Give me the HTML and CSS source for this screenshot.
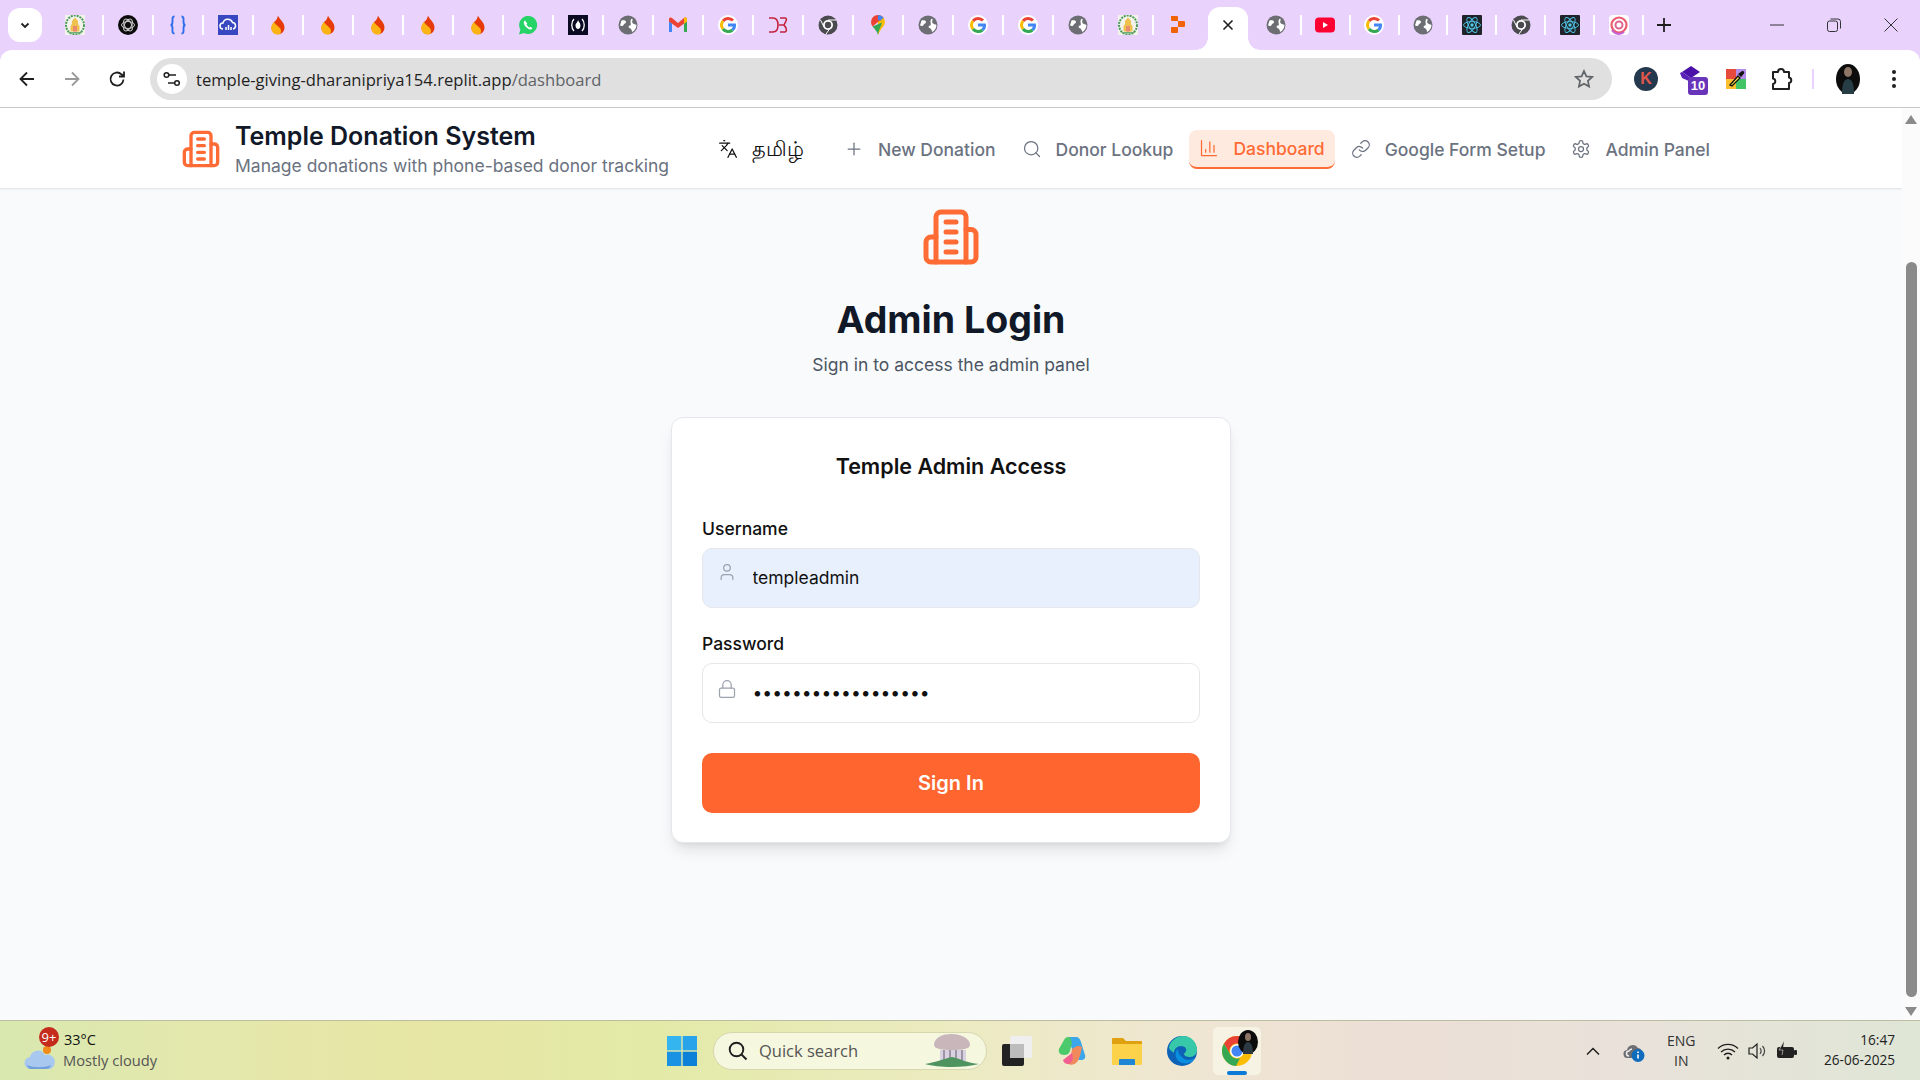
FILE: index.html
```html
<!DOCTYPE html>
<html lang="en">
<head>
<meta charset="utf-8">
<title>Temple Donation System</title>
<link rel="stylesheet" href="styles.css">
</head>
<body>
<svg class="sprite" width="0" height="0" aria-hidden="true">
  <symbol id="tn" viewBox="0 0 20 20"><rect width="20" height="20" fill="#f3f3ec"/><ellipse cx="10" cy="10" rx="9" ry="9.500" fill="none" stroke="#4c9a5a" stroke-width="2" stroke-dasharray="2 1"/><path d="M10 2.500l3 3.500v3l1.500 2v5.500h-9V11L7 9V6z" fill="#efc24f"/><path d="M8 11h4v5.500H8z" fill="#e98b6c"/><path d="M4 17h12v1.500H4z" fill="#6fae7a"/></symbol>
  <symbol id="openai" viewBox="0 0 20 20"><circle cx="10" cy="10" r="10" fill="#0b0b0b"/><g fill="none" stroke="#ccc" stroke-width="1"><ellipse cx="10" cy="10" rx="6.500" ry="3.500"/><ellipse cx="10" cy="10" rx="6.500" ry="3.500" transform="rotate(60 10 10)"/><ellipse cx="10" cy="10" rx="6.500" ry="3.500" transform="rotate(120 10 10)"/></g></symbol>
  <symbol id="braces" viewBox="0 0 20 20"><path d="M6.500 1.500C4 1.500 4.500 4 4.500 6.500S4 10 2.500 10c1.500 0 2 1 2 3.500s-.5 5 2 5M13.500 1.500c2.500 0 2 2.500 2 5s.5 3.500 2 3.500c-1.500 0-2 1-2 3.500s.5 5-2 5" fill="none" stroke="#2f6fed" stroke-width="1.900"/></symbol>
  <symbol id="cloud" viewBox="0 0 20 20"><rect width="20" height="20" fill="#3848c0"/><path d="M5 14a3 3 0 0 1 0-6 5 5 0 0 1 9.500-.5A3.300 3.300 0 0 1 15 14" fill="none" stroke="#fff" stroke-width="1.500"/><path d="M8 15v-3M10.500 15v-5M13 15v-3" stroke="#fff" stroke-width="1.500"/></symbol>
  <symbol id="fire" viewBox="0 0 20 20"><path d="M10 .500c1 3.500 6.500 6.500 6.500 12A6.500 6.500 0 0 1 3.500 13c0-3 2-4.500 3-6.500C8.500 5.500 9.500 3 10 .500z" fill="#e63a0a"/><path d="M6 7c-2 2-3 4-2.700 6.300A6 6 0 0 0 10 19.500c2 0 3-1 3-3.500 0-4-5-5-7-9z" fill="#fcb316"/></symbol>
  <symbol id="wa" viewBox="0 0 20 20"><path d="M1 19.500l1.400-5A9 9 0 1 1 6 17.900z" fill="#25d366"/><path d="M7 5.500c-2 1-1.500 4 1 6.500s5 3.500 6.500 1.500l-2-1.700-1 .8c-1-.3-2.700-2-3-3l.8-1z" fill="#fff"/></symbol>
  <symbol id="fcc" viewBox="0 0 20 20"><rect width="20" height="20" fill="#0a0a23"/><path d="M6 4c-3 3-3 9 0 12M14 4c3 3 3 9 0 12" fill="none" stroke="#fff" stroke-width="1.300"/><path d="M10 5c.5 2 2.500 3 2.500 5.500S11 14 10 14s-2.500-1-2.500-3.500S9.500 8 10 5z" fill="#fff"/></symbol>
  <symbol id="globe" viewBox="0 0 20 20"><circle cx="10" cy="10" r="9.500" fill="#6d6e73"/><path d="M3.500 5.500c2.500-.5 4.500 0 4.500 1.500S6 8.500 5.500 10 3 11 2 10.500zM14.500 4c.5 1.500-1 2.500 0 4s3 1 4 2c0 3-2 6-4.500 7 0-2-1-3.500-2.500-4s-1-2.500.5-2.500.5-2.500.5-4 1-3.200 2-2.500z" fill="#fff"/></symbol>
  <symbol id="gmail" viewBox="0 0 20 20"><path d="M1 17V6l3 2.500V17z" fill="#4285f4"/><path d="M19 17V6l-3 2.500V17z" fill="#34a853"/><path d="M1 6.500V4c0-1.500 2-2 3-1l6 5 6-5c1-1 3-.5 3 1v2.500L10 13z" fill="#ea4335"/><path d="M16 2.800c1-.8 3-.3 3 1.200v2.500l-3 2.300z" fill="#fbbc04"/></symbol>
  <symbol id="google" viewBox="0 0 20 20"><circle cx="10" cy="10" r="10" fill="#fff"/><g fill="none" stroke-width="3"><path d="M15 5.600A6.500 6.500 0 0 0 5 6" stroke="#ea4335"/><path d="M5 6a6.500 6.500 0 0 0 0 8" stroke="#fbbc04"/><path d="M5 14a6.500 6.500 0 0 0 9.500 1" stroke="#34a853"/><path d="M14.500 15a6 6 0 0 0 2-5H10" stroke="#4285f4"/></g></symbol>
  <symbol id="d3" viewBox="0 0 20 20"><path d="M1 3h4c4 0 5 3 5 7s-1 7-5 7H1M12 3h5c1 0 2 1 1 3l-2 4 2 3c1 2 0 4-1 4h-5M11 10h5" fill="none" stroke="#c4233c" stroke-width="1.600"/></symbol>
  <symbol id="chrome" viewBox="0 0 20 20"><circle cx="10" cy="10" r="9.500" fill="#4a4a4f"/><circle cx="10" cy="10" r="5" fill="#fff"/><circle cx="10" cy="10" r="3.200" fill="#4a4a4f"/><path d="M10 5h8M6 12L2.500 5M13 12l-5 7" stroke="#fff" stroke-width="1"/></symbol>
  <symbol id="maps" viewBox="0 0 20 20"><path d="M10 0a7 7 0 0 1 7 7c0 4-5 7-7 13z" fill="#fbbc04"/><path d="M10 0a7 7 0 0 1 5.500 2.600L4.500 11.500C3.500 10 3 8.500 3 7a7 7 0 0 1 7-7z" fill="#ea4335"/><path d="M10 0a7 7 0 0 1 5.500 2.600L12 6a2.500 2.500 0 0 0-2-1z" fill="#4285f4"/><path d="M4.500 11.500L14 7.500C13 12 11 14 10 20c-1-4-3.500-6-5.500-8.500z" fill="#34a853"/></symbol>
  <symbol id="replit" viewBox="0 0 20 20"><path d="M3 1h6a1 1 0 0 1 1 1v4H4a1 1 0 0 1-1-1zM10 6h6a1 1 0 0 1 1 1v4a1 1 0 0 1-1 1h-6zM3 12h7v5a1 1 0 0 1-1 1H4a1 1 0 0 1-1-1z" fill="#f26207"/></symbol>
  <symbol id="yt" viewBox="0 0 20 20"><rect y="2.500" width="20" height="15" rx="4" fill="#ff0033"/><path d="M8 7l5 3-5 3z" fill="#fff"/></symbol>
  <symbol id="react" viewBox="0 0 20 20"><rect width="20" height="20" rx="1" fill="#20232a"/><g fill="none" stroke="#4fc8e8" stroke-width=".9"><ellipse cx="10" cy="10" rx="8.500" ry="3.400"/><ellipse cx="10" cy="10" rx="8.500" ry="3.400" transform="rotate(60 10 10)"/><ellipse cx="10" cy="10" rx="8.500" ry="3.400" transform="rotate(120 10 10)"/></g><circle cx="10" cy="10" r="1.700" fill="#4fc8e8"/></symbol>
  <symbol id="spiral" viewBox="0 0 20 20"><rect width="20" height="20" rx="4" fill="#fff"/><circle cx="10" cy="10" r="7.500" fill="none" stroke="#ec5a6e" stroke-width="2.200"/><circle cx="10" cy="10" r="3.500" fill="none" stroke="#e0628f" stroke-width="2"/><path d="M3 15a8 8 0 0 0 12 2" stroke="#c860d0" stroke-width="2.200" fill="none"/></symbol>
  <symbol id="bld" viewBox="0 0 24 24"><path d="M6 22V4a2 2 0 0 1 2-2h8a2 2 0 0 1 2 2v18Z"/><path d="M6 12H4a2 2 0 0 0-2 2v6a2 2 0 0 0 2 2h2"/><path d="M18 9h2a2 2 0 0 1 2 2v9a2 2 0 0 1-2 2h-2"/><path d="M10 6h4"/><path d="M10 10h4"/><path d="M10 14h4"/><path d="M10 18h4"/></symbol>
</svg>

<div class="tabstrip">
  <button class="tab-menu"><svg viewBox="0 0 12 12" width="12" height="12"><path d="M2.500 4.500L6 8l3.500-3.500" fill="none" stroke="#1f1f1f" stroke-width="1.800"/></svg></button>
  <div class="tabs">
    <span class="tab tab-first"><svg class="fav"><use href="#tn"/></svg></span>
    <span class="tab"><svg class="fav"><use href="#openai"/></svg></span>
    <span class="tab"><svg class="fav"><use href="#braces"/></svg></span>
    <span class="tab"><svg class="fav"><use href="#cloud"/></svg></span>
    <span class="tab"><svg class="fav"><use href="#fire"/></svg></span>
    <span class="tab"><svg class="fav"><use href="#fire"/></svg></span>
    <span class="tab"><svg class="fav"><use href="#fire"/></svg></span>
    <span class="tab"><svg class="fav"><use href="#fire"/></svg></span>
    <span class="tab"><svg class="fav"><use href="#fire"/></svg></span>
    <span class="tab"><svg class="fav"><use href="#wa"/></svg></span>
    <span class="tab"><svg class="fav"><use href="#fcc"/></svg></span>
    <span class="tab"><svg class="fav"><use href="#globe"/></svg></span>
    <span class="tab"><svg class="fav"><use href="#gmail"/></svg></span>
    <span class="tab"><svg class="fav"><use href="#google"/></svg></span>
    <span class="tab"><svg class="fav"><use href="#d3"/></svg></span>
    <span class="tab"><svg class="fav"><use href="#chrome"/></svg></span>
    <span class="tab"><svg class="fav"><use href="#maps"/></svg></span>
    <span class="tab"><svg class="fav"><use href="#globe"/></svg></span>
    <span class="tab"><svg class="fav"><use href="#google"/></svg></span>
    <span class="tab"><svg class="fav"><use href="#google"/></svg></span>
    <span class="tab"><svg class="fav"><use href="#globe"/></svg></span>
    <span class="tab"><svg class="fav"><use href="#tn"/></svg></span>
    <span class="tab tab-last"><svg class="fav"><use href="#replit"/></svg></span>
    <span class="tab-active"><svg viewBox="0 0 12 12" width="12" height="12"><path d="M1.500 1.500l9 9M10.500 1.500l-9 9" stroke="#1f1f1f" stroke-width="1.600"/></svg></span>
    <span class="tab tab-after tab-after-first"><svg class="fav"><use href="#globe"/></svg></span>
    <span class="tab tab-after"><svg class="fav"><use href="#yt"/></svg></span>
    <span class="tab tab-after"><svg class="fav"><use href="#google"/></svg></span>
    <span class="tab tab-after"><svg class="fav"><use href="#globe"/></svg></span>
    <span class="tab tab-after"><svg class="fav"><use href="#react"/></svg></span>
    <span class="tab tab-after"><svg class="fav"><use href="#chrome"/></svg></span>
    <span class="tab tab-after"><svg class="fav"><use href="#react"/></svg></span>
    <span class="tab tab-after"><svg class="fav"><use href="#spiral"/></svg></span>
    <span class="tab-new"><svg viewBox="0 0 14 14" width="14" height="14"><path d="M7 0v14M0 7h14" stroke="#1f1f1f" stroke-width="1.800"/></svg></span>
  </div>
  <div class="winctl">
    <svg viewBox="0 0 14 14" width="14" height="14"><path d="M0 7h14" stroke="#333" stroke-width="1"/></svg>
    <svg viewBox="0 0 14 14" width="14" height="14"><rect x=".5" y="3" width="10" height="10.500" rx="2" fill="none" stroke="#333"/><path d="M3.500 1h7.500a2.500 2.500 0 0 1 2.500 2.500v7" fill="none" stroke="#333"/></svg>
    <svg viewBox="0 0 14 14" width="14" height="14"><path d="M.5.500l13 13M13.500.5l-13 13" stroke="#333" stroke-width="1"/></svg>
  </div>
</div>

<div class="toolbar">
  <svg class="tb-icon" viewBox="0 0 20 20"><path d="M17 10H4M10 3.500L3.500 10l6.500 6.500" fill="none" stroke="#1f1f1f" stroke-width="1.800"/></svg>
  <svg class="tb-icon" viewBox="0 0 20 20"><path d="M3 10h13M10 3.500l6.500 6.500-6.500 6.500" fill="none" stroke="#9a9a9a" stroke-width="1.800"/></svg>
  <svg class="tb-icon" viewBox="0 0 20 20"><path d="M16.500 10.500a6.500 6.500 0 1 1-2-5.200L17 7.500M17 2.500v5h-5" fill="none" stroke="#1f1f1f" stroke-width="1.800"/></svg>
  <div class="omnibox">
    <span class="site-info"><svg viewBox="0 0 18 18" width="18" height="18"><path d="M1 5h12M5 13h12" stroke="#1f1f1f" stroke-width="1.600"/><circle cx="3.500" cy="5" r="2.300" fill="#fff" stroke="#1f1f1f" stroke-width="1.500"/><circle cx="14" cy="13" r="2.300" fill="#fff" stroke="#1f1f1f" stroke-width="1.500"/></svg></span>
    <span class="url">temple-giving-dharanipriya154.replit.app<span class="url-path">/dashboard</span></span>
    <svg class="star" viewBox="0 0 20 20"><path d="M10 2l2.400 5.400 5.800.6-4.300 3.900 1.200 5.700L10 14.700l-5.100 2.900 1.200-5.700L1.800 8l5.800-.6z" fill="none" stroke="#5f6368" stroke-width="1.700"/></svg>
  </div>
  <div class="exts">
    <span class="ext-k">K</span>
    <span class="ext-cap"><svg viewBox="0 0 26 32" width="26" height="32"><path d="M12 3l9 6-9 6-9-6z" fill="#4a10a8"/><path d="M1 10l2-1 9 6v4l-9-4z" fill="#5a20b8"/></svg><span class="ext-badge">10</span></span>
    <svg class="ext-img" viewBox="0 0 20 20"><rect width="10" height="10" fill="#e64a3c"/><rect x="10" width="10" height="10" fill="#b38be8"/><rect y="10" width="10" height="10" fill="#fbc02d"/><rect x="10" y="10" width="10" height="10" fill="#43c467"/><path d="M4 16l8-9 2 2-8 8z" fill="#fde047" stroke="#111" stroke-width="1.300"/><path d="M12 5l3 3 3-3.500c.7-2-1-3-2.500-2z" fill="#111"/></svg>
    <svg class="ext-puzzle" viewBox="0 0 22 24"><path d="M2 5h5a3 3 0 0 1 6 0h5v5.500a2.800 2.800 0 0 1 0 5.500v6H2v-5a2.800 2.800 0 0 0 0-5.500z" fill="none" stroke="#1f1f1f" stroke-width="2" stroke-linejoin="round"/></svg>
    <span class="ext-sep"></span>
    <svg class="avatar" viewBox="0 0 24 30"><ellipse cx="12" cy="15" rx="12" ry="15" fill="#0c0c0c"/><ellipse cx="12" cy="8" rx="4" ry="5" fill="#8d7666"/><path d="M6 30c0-10 2-15 6-15s6 5 6 15z" fill="#263d46"/></svg>
    <svg class="kebab" viewBox="0 0 4 20"><circle cx="2" cy="3" r="2" fill="#1f1f1f"/><circle cx="2" cy="10" r="2" fill="#1f1f1f"/><circle cx="2" cy="17" r="2" fill="#1f1f1f"/></svg>
  </div>
</div>

<div class="viewport">
  <div class="page">
    <header class="app-header">
      <div class="brand">
        <svg class="logo-sm"><use href="#bld"/></svg>
        <div>
          <div class="brand-title">Temple Donation System</div>
          <div class="brand-sub">Manage donations with phone-based donor tracking</div>
        </div>
      </div>
      <nav class="nav">
        <a class="lang"><svg class="ico ico-dark" viewBox="0 0 24 24"><path d="m5 8 6 6"/><path d="m4 14 6-6 2-3"/><path d="M2 5h12"/><path d="M7 2h1"/><path d="m22 22-5-10-5 10"/><path d="M14 18h6"/></svg><span>தமிழ்</span></a>
        <a class="nav-link"><svg class="ico" viewBox="0 0 24 24"><path d="M5 12h14"/><path d="M12 5v14"/></svg>New Donation</a>
        <a class="nav-link"><svg class="ico" viewBox="0 0 24 24"><circle cx="11" cy="11" r="8"/><path d="m21 21-4.300-4.300"/></svg>Donor Lookup</a>
        <a class="nav-link active"><svg class="ico" viewBox="0 0 24 24"><path d="M3 3v18h18"/><path d="M18 17V9"/><path d="M13 17V5"/><path d="M8 17v-3"/></svg>Dashboard</a>
        <a class="nav-link"><svg class="ico" viewBox="0 0 24 24"><path d="M10 13a5 5 0 0 0 7.540.54l3-3a5 5 0 0 0-7.070-7.070l-1.720 1.710"/><path d="M14 11a5 5 0 0 0-7.540-.54l-3 3a5 5 0 0 0 7.070 7.070l1.710-1.710"/></svg>Google Form Setup</a>
        <a class="nav-link"><svg class="ico" viewBox="0 0 24 24"><path d="M12.220 2h-.44a2 2 0 0 0-2 2v.18a2 2 0 0 1-1 1.730l-.43.25a2 2 0 0 1-2 0l-.15-.08a2 2 0 0 0-2.730.73l-.22.38a2 2 0 0 0 .73 2.730l.15.1a2 2 0 0 1 1 1.720v.51a2 2 0 0 1-1 1.740l-.15.09a2 2 0 0 0-.73 2.730l.22.38a2 2 0 0 0 2.730.73l.15-.08a2 2 0 0 1 2 0l.43.25a2 2 0 0 1 1 1.730V20a2 2 0 0 0 2 2h.44a2 2 0 0 0 2-2v-.18a2 2 0 0 1 1-1.730l.43-.25a2 2 0 0 1 2 0l.15.08a2 2 0 0 0 2.730-.73l.22-.39a2 2 0 0 0-.73-2.730l-.15-.08a2 2 0 0 1-1-1.740v-.5a2 2 0 0 1 1-1.740l.15-.09a2 2 0 0 0 .73-2.730l-.22-.38a2 2 0 0 0-2.730-.73l-.15.08a2 2 0 0 1-2 0l-.43-.25a2 2 0 0 1-1-1.730V4a2 2 0 0 0-2-2z"/><circle cx="12" cy="12" r="3"/></svg>Admin Panel</a>
      </nav>
    </header>
    <main class="login">
      <svg class="logo-lg"><use href="#bld"/></svg>
      <h1 class="login-title">Admin Login</h1>
      <p class="login-sub">Sign in to access the admin panel</p>
      <form class="card">
        <h2 class="card-title">Temple Admin Access</h2>
        <label class="field-label field-label-1">Username</label>
        <div class="field field-filled">
          <svg class="field-ico" viewBox="0 0 24 24"><path d="M19 21v-2a4 4 0 0 0-4-4H9a4 4 0 0 0-4 4v2"/><circle cx="12" cy="7" r="4"/></svg>
          <input class="field-input" type="text" value="templeadmin">
        </div>
        <label class="field-label">Password</label>
        <div class="field">
          <svg class="field-ico field-ico-lock" viewBox="0 0 24 24"><rect x="3" y="11" width="18" height="11" rx="2"/><path d="M7 11V7a5 5 0 0 1 10 0v4"/></svg>
          <input class="field-input" type="password" value="templeadmin123456x">
        </div>
        <button class="submit" type="button">Sign In</button>
      </form>
    </main>
  </div>
  <div class="scrollbar">
    <span class="arrow-up"></span>
    <span class="thumb"></span>
    <span class="arrow-down"></span>
  </div>
</div>

<footer class="taskbar">
  <div class="weather">
    <span class="weather-ico">
      <svg viewBox="0 0 34 26" width="34" height="26"><circle cx="23" cy="6" r="4" fill="#ef8a1c"/><path d="M7 25a6 6 0 0 1-1-12 8 8 0 0 1 15-2 7 7 0 0 1 5 14z" fill="#a9c8f0"/><path d="M3 21c6 3 18 3 24 0-1 3-3 4-5 4H7c-2 0-3-1-4-4z" fill="#6f9fdc"/></svg>
      <span class="weather-badge">9+</span>
    </span>
    <div class="weather-text"><div class="w-temp">33°C</div><div class="w-desc">Mostly cloudy</div></div>
  </div>
  <div class="task-center">
    <svg class="win-logo" viewBox="0 0 30 30"><rect width="14.300" height="14.300" fill="#35b5f0"/><rect x="15.700" width="14.300" height="14.300" fill="#29a4ea"/><rect y="15.700" width="14.300" height="14.300" fill="#1a92e4"/><rect x="15.700" y="15.700" width="14.300" height="14.300" fill="#0d80d8"/></svg>
    <div class="searchbox">
      <svg viewBox="0 0 20 20" width="20" height="20"><circle cx="8.500" cy="8.500" r="6.800" fill="none" stroke="#1f1f1f" stroke-width="1.900"/><path d="M13.500 13.500L18.500 18.500" stroke="#1f1f1f" stroke-width="2"/></svg>
      <span class="search-text">Quick search</span>
      <svg class="search-art" viewBox="0 0 56 36" width="56" height="36"><path d="M10 12c0-8 10-11 17-11s19 3 19 11c0 4-8 5-18 5s-18-1-18-5z" fill="#c9b6bb"/><path d="M16 17h26v11H16z" fill="#d8d2e0"/><path d="M20 17v11M26 17v11M32 17v11M38 17v11" stroke="#9f93a8" stroke-width="2"/><path d="M1 31c12-2 18-5 27-7 9 2 15 6 27 7-15 4-40 4-54 0z" fill="#4f9460"/></svg>
    </div>
    <svg class="task-ico" viewBox="0 0 30 30"><rect x="8" y="0" width="22" height="22" rx="2" fill="#efefef"/><rect y="8" width="22" height="22" rx="2" fill="#222"/><rect x="8" y="8" width="14" height="14" fill="#bdbdbd"/></svg>
    <svg class="task-ico" viewBox="0 0 30 30"><path d="M10 1h9c3 0 4 2 5 5l4 13c1 3-1 5-4 5h-3c-3 0-3-2-4-5L13 7c-1-3-2-6-3-6z" fill="#3ba7ea"/><path d="M7 4c1-2 2-3 5-3 2 0 2 3 3 6l-2 8c-1 3-3 4-6 4-4 0-6-3-5-6z" fill="#4cc96a"/><path d="M15 13l5-3c2 0 4 0 5 1-1 6-3 14-6 16-2 2-6 2-8 1-2-1 1-1 2-4z" fill="#f08a5d"/><path d="M12 28c-2 0-5 0-6-4l9-7c1 4 2 8-3 11z" fill="#f25f8f"/></svg>
    <svg class="task-ico" viewBox="0 0 30 30"><path d="M0 3a1 1 0 0 1 1-1h10l3 3h15a1 1 0 0 1 1 1v4H0z" fill="#e0a110"/><path d="M0 8h30v20a1 1 0 0 1-1 1H1a1 1 0 0 1-1-1z" fill="#fbd24a"/><path d="M8 23h14a1 1 0 0 1 1 1v5H7v-5a1 1 0 0 1 1-1z" fill="#1f86d6"/></svg>
    <svg class="task-ico" viewBox="0 0 30 30"><circle cx="15" cy="15" r="15" fill="#0d62b8"/><path d="M2 11C4 4 10 0 16 0c8 0 14 6 14 14 0 4-3 7-7 7-3 0-6-1-6-3 0-1 1-1 2-3s-1-5-5-5-7 3-7 7c-2-2-5-3-5-6z" fill="#36c8a8"/><path d="M11 13c-3 2-4 9 2 13 6 3 12 1 15-4-3 2-9 3-12 0-3-2-5-5-5-9z" fill="#0a8ee0"/></svg>
    <div class="task-active">
      <svg viewBox="0 0 30 30" width="30" height="30"><circle cx="15" cy="15" r="15" fill="#fbbc04"/><path d="M15 0a15 15 0 0 1 13 7.500H15A7.500 7.500 0 0 0 8.500 19L2 7.500A15 15 0 0 1 15 0z" fill="#ea4335"/><path d="M2 7.500L8.500 19A7.500 7.500 0 0 0 18 22l-4 8A15 15 0 0 1 2 7.500z" fill="#34a853"/><circle cx="15" cy="15" r="7" fill="#fff"/><circle cx="15" cy="15" r="5.500" fill="#4285f4"/></svg>
      <svg class="task-avatar" viewBox="0 0 20 24" width="20" height="24"><ellipse cx="10" cy="12" rx="10" ry="12" fill="#0c0c0c"/><ellipse cx="10" cy="7" rx="3" ry="4" fill="#8d7666"/><path d="M5 24c0-8 2-12 5-12s5 4 5 12z" fill="#2a3a40"/></svg>
      <span class="task-ind"></span>
    </div>
  </div>
  <div class="tray">
    <svg class="tray-caret" viewBox="0 0 16 10" width="16" height="10"><path d="M2 8.500L8 2.500l6 6" fill="none" stroke="#1f1f1f" stroke-width="1.500"/></svg>
    <span class="tray-cloud"><svg viewBox="0 0 22 22" width="22" height="22"><path d="M5 18a4 4 0 0 1-1-8 6 6 0 0 1 11-2 5 5 0 0 1 4 5l-4 5z" fill="#6d6f72"/><path d="M6 16a2.500 2.500 0 0 1 0-5 4 4 0 0 1 3-2" fill="none" stroke="#eee" stroke-width="1.500"/><circle cx="15" cy="15.500" r="6.500" fill="#0f6cbd"/><path d="M15 14.500v4M15 11.500v1.500" stroke="#fff" stroke-width="1.600"/></svg></span>
    <div class="tray-lang"><div>ENG</div><div>IN</div></div>
    <svg class="tray-wifi" viewBox="0 0 22 18" width="22" height="18"><path d="M1 6.500a14 14 0 0 1 20 0M4 10a10 10 0 0 1 14 0M7 13a5.500 5.500 0 0 1 8 0" fill="none" stroke="#1f1f1f" stroke-width="1.300"/><circle cx="11" cy="16" r="1.500" fill="#1f1f1f"/></svg>
    <svg class="tray-vol" viewBox="0 0 20 18" width="20" height="18"><path d="M1 6h3.500L9 2v14l-4.500-4H1z" fill="none" stroke="#1f1f1f" stroke-width="1.200"/><path d="M12 6c1.500 2 1.500 4 0 6M14.500 4c2.500 3 2.500 7 0 10" fill="none" stroke="#444" stroke-width="1.200"/></svg>
    <svg class="tray-batt" viewBox="0 0 22 20" width="22" height="20"><rect x="1" y="6" width="17" height="11" rx="2" fill="#222"/><rect x="18" y="9" width="3" height="5" rx="1" fill="#222"/><path d="M8 0L3 9h4l-1 5" fill="#222" stroke="#e9e2da" stroke-width=".6"/></svg>
    <div class="clock"><div>16:47</div><div>26-06-2025</div></div>
  </div>
</footer>
</body>
</html>
```
FILE: styles.css
```css
* { box-sizing: border-box; }
html, body { margin: 0; padding: 0; height: 100%; overflow: hidden; }
body { display: flex; flex-direction: column; width: 1920px; height: 1080px; font-family: Inter, "Noto Sans", sans-serif; background: #e9d3fd; }
.sprite { position: absolute; }

/* Browser tab strip */
.tabstrip { height: 50px; flex: none; display: flex; align-items: flex-start; background: #e9d3fd; }
.tab-menu { width: 34px; height: 34px; margin: 8px 8px 0 8px; border: 0; border-radius: 12px; background: #fff; display: flex; align-items: center; justify-content: center; padding: 0; }
.tabs { display: flex; align-items: flex-start; }
.tab { width: 50.03px; height: 50px; display: flex; align-items: center; justify-content: center; position: relative; }
.tab-first { width: 52.5px; padding-right: 2.4px; }
.tab::after { content: ""; position: absolute; right: -1px; top: 15px; width: 2px; height: 20px; background: #fff; }
.tab-last::after { display: none; }
.tab-after { width: 48.9px; }
.tab-after-first { margin-left: 3.5px; }
.fav { width: 20px; height: 20px; display: block; }
.tab-active { width: 40px; height: 43px; margin-top: 7px; margin-left: 5.5px; background: #fff; border-radius: 12px 12px 0 0; display: flex; align-items: center; justify-content: center; padding-bottom: 7px; position: relative; }
.tab-active::before, .tab-active::after { content: ""; position: absolute; bottom: 0; width: 12px; height: 12px; }
.tab-active::before { left: -12px; background: radial-gradient(circle at 0 0, transparent 11.5px, #fff 12px); }
.tab-active::after { right: -12px; background: radial-gradient(circle at 100% 0, transparent 11.5px, #fff 12px); }
.tab-new { width: 30px; height: 50px; display: flex; align-items: center; justify-content: center; margin-left: 6px; }
.winctl { margin-left: auto; height: 50px; width: 150px; display: flex; align-items: center; justify-content: space-between; padding-right: 22px; }

/* Browser toolbar */
.toolbar { height: 58px; flex: none; background: #fff; border-radius: 12px 12px 0 0; border-bottom: 1px solid #c8c8c8; display: flex; align-items: center; padding: 1px 0 0 17px; }
.tb-icon { width: 20px; height: 20px; flex: none; margin-right: 25px; }
.omnibox { margin-left: -2px; width: 1462px; height: 42px; background: #e0e0e0; border-radius: 21px; display: flex; align-items: center; padding: 0 18px 0 7px; }
.site-info { width: 30px; height: 30px; background: #fff; border-radius: 50%; display: flex; align-items: center; justify-content: center; }
.url { margin-left: 9px; font-family: "Open Sans", sans-serif; font-size: 16.6px; color: #1f1f1f; white-space: nowrap; }
.url-path { color: #5f6368; }
.star { width: 20px; height: 20px; margin-left: auto; }
.exts { display: flex; align-items: center; position: relative; flex: 1; padding-left: 22px; }
.ext-k { width: 24px; height: 24px; border-radius: 50%; background: #24394d; color: #e2574c; font: 700 16px "Liberation Sans", sans-serif; display: flex; align-items: center; justify-content: center; }
.ext-cap { width: 30px; height: 32px; margin-left: 21px; position: relative; display: block; }
.ext-badge { position: absolute; right: 1px; bottom: 0; width: 20px; height: 18px; border-radius: 3px; background: #6734ba; color: #fff; font: 700 13px "Liberation Sans", sans-serif; text-align: center; line-height: 18px; }
.ext-img { width: 20px; height: 20px; margin-left: 17px; }
.ext-puzzle { width: 22px; height: 24px; margin-left: 25px; }
.ext-sep { width: 2px; height: 20px; background: #e9d3fd; margin-left: 19px; }
.avatar { width: 24px; height: 30px; margin-left: 22px; }
.kebab { width: 4px; height: 20px; margin-left: 32px; }

/* Viewport */
.viewport { flex: 1; min-height: 0; display: flex; background: #f9fafb; }
.page { flex: 1; min-width: 0; display: flex; flex-direction: column; }
.app-header { height: 81px; flex: none; background: #fff; border-bottom: 1px solid #e5e7eb; box-shadow: 0 1px 2px rgba(0,0,0,.04); display: flex; align-items: center; padding: 2px 182px 0 183px; }
.brand { display: flex; align-items: center; gap: 14px; }
.logo-sm { width: 40px; height: 40px; flex: none; margin-left: -2px; fill: none; stroke: #ff6b35; stroke-width: 2; stroke-linecap: round; stroke-linejoin: round; }
.brand-title { font-size: 25px; font-weight: 600; color: #111827; line-height: 30px; }
.brand-sub { margin-top: 3px; font-size: 17.5px; color: #6b7280; line-height: 24px; }
.nav { display: flex; align-items: center; gap: 6px; margin-left: auto; font-size: 17.5px; font-weight: 500; color: #6b7280; white-space: nowrap; }
.lang { display: flex; align-items: center; gap: 14px; color: #111; margin-right: 24px; font-family: "Noto Sans", sans-serif; font-size: 21px; }
.nav-link { display: flex; align-items: center; gap: 14px; height: 39px; padding: 0 10px; border-radius: 8px; }
.nav-link.active { background: #ffeadf; color: #ff6b35; border-bottom: 2px solid #ff6b35; }
.ico { width: 20px; height: 20px; flex: none; fill: none; stroke: currentColor; stroke-width: 1.5; stroke-linecap: round; stroke-linejoin: round; }
.ico-dark { stroke: #111; }

/* Login */
.login { flex: 1; display: flex; flex-direction: column; align-items: center; padding-top: 18px; }
.logo-lg { width: 60px; height: 60px; flex: none; fill: none; stroke: #ff6b35; stroke-width: 2; stroke-linecap: round; stroke-linejoin: round; }
.login-title { margin: 30px 0 0; font-size: 37.5px; font-weight: 700; line-height: 45px; color: #111827; }
.login-sub { margin: 10px 0 0; font-size: 17.5px; line-height: 25px; color: #4b5563; }
.card { width: 560px; height: 426px; margin-top: 40px; background: #fff; border: 1px solid #e5e7eb; border-radius: 12px; box-shadow: 0 10px 15px -3px rgba(0,0,0,.1), 0 4px 6px -4px rgba(0,0,0,.1); padding: 30px; display: flex; flex-direction: column; }
.card-title { margin: 3px 0 0; text-align: center; font-size: 21.5px; font-weight: 600; line-height: 30px; color: #111; }
.field-label { margin-top: 23px; font-size: 17.5px; font-weight: 500; line-height: 25px; color: #111; }
.field-label-1 { margin-top: 35px; }
.field { margin-top: 7px; height: 60px; flex: none; display: flex; align-items: center; gap: 15.5px; border: 1px solid #e5e7eb; border-radius: 10px; padding: 0 0 0 14px; background: #fff; }
.field-filled { background: #e8f0fe; }
.field-ico { width: 20px; height: 20px; flex: none; margin-top: -12px; fill: none; stroke: #9ca3af; stroke-width: 1.5; stroke-linecap: round; stroke-linejoin: round; }
.field-ico-lock { margin-top: -8px; }
.field-input { flex: 1; min-width: 0; border: 0; background: transparent; padding: 0 0 2px; outline: 0; font: 400 17.5px Inter, sans-serif; color: #111; }
.submit { margin-top: 30px; height: 60px; flex: none; border: 0; border-radius: 10px; background: #ff652f; color: #fff; font: 600 20px Inter, sans-serif; }

/* Scrollbar */
.scrollbar { width: 18px; flex: none; background: #fbfbfb; display: flex; flex-direction: column; align-items: center; }
.arrow-up { width: 0; height: 0; margin-top: 7px; border: 6.5px solid transparent; border-top: 0; border-bottom: 9px solid #8a8a8a; }
.thumb { width: 11px; height: 735px; margin-top: 138px; background: #8a8a8a; border-radius: 6px; }
.arrow-down { width: 0; height: 0; margin-top: 10px; border: 6.5px solid transparent; border-bottom: 0; border-top: 9px solid #8a8a8a; }

/* Taskbar */
.taskbar { height: 60px; flex: none; border-top: 1px solid #bdbd9f; background: linear-gradient(90deg, #d8e8af 0%, #e4e8ad 10%, #e7e6a4 22%, #e3eaa7 34%, #ecebc2 50%, #efe6d2 62%, #ecdfd6 72%, #e9e2da 85%, #dfe6d6 100%); display: flex; position: relative; font-family: "Open Sans", sans-serif; color: #1f1f1f; }
.weather { width: 667px; flex: none; display: flex; align-items: center; padding-left: 24px; gap: 5px; }
.weather-ico { width: 34px; height: 34px; position: relative; display: block; margin-top: 4px; }
.weather-ico svg { position: absolute; left: 0; bottom: 0; }
.weather-badge { position: absolute; left: 15px; top: -9px; width: 20px; height: 20px; border-radius: 50%; background: #c42b1c; color: #fff; font-size: 13px; line-height: 20px; text-align: center; }
.weather-text { padding-bottom: 2px; }
.w-temp { padding-left: 1px; font-size: 14.5px; line-height: 20px; color: #111; }
.w-desc { font-size: 14.7px; line-height: 20px; color: #555; }
.task-center { display: flex; align-items: center; }
.win-logo { width: 30px; height: 30px; flex: none; }
.searchbox { width: 274px; height: 38px; margin-left: 16px; border-radius: 19px; background: #f6f7df; border: 1px solid #d7d7ae; display: flex; align-items: center; padding-left: 14px; position: relative; }
.search-text { margin-left: 11px; font-size: 16.5px; color: #555; }
.search-art { position: absolute; right: 6px; top: 0; }
.task-ico { width: 30px; height: 30px; flex: none; margin-left: 25px; }
.searchbox + .task-ico { margin-left: 15px; }
.task-active { width: 48px; height: 48px; margin-left: 16px; background: #f6f2e4; border-radius: 5px; display: flex; align-items: center; justify-content: center; position: relative; }
.task-avatar { position: absolute; right: 3px; top: 3px; }
.task-ind { position: absolute; left: 14px; bottom: 0; width: 20px; height: 4px; border-radius: 2px; background: #0a7bd6; }
.tray { margin-left: auto; width: 335px; display: flex; align-items: center; padding-right: 25px; }
.tray svg { flex: none; }
.tray-cloud { margin-left: 22px; display: block; height: 22px; }
.tray-lang { margin-left: 22px; font-size: 14px; line-height: 20px; text-align: center; color: #333; }
.tray-wifi { margin-left: 21px; }
.tray-vol { margin-left: 9px; }
.tray-batt { margin-left: 8px; }
.clock { margin-left: auto; padding-bottom: 2px; font-size: 13.6px; line-height: 20px; text-align: right; color: #222; }
```
